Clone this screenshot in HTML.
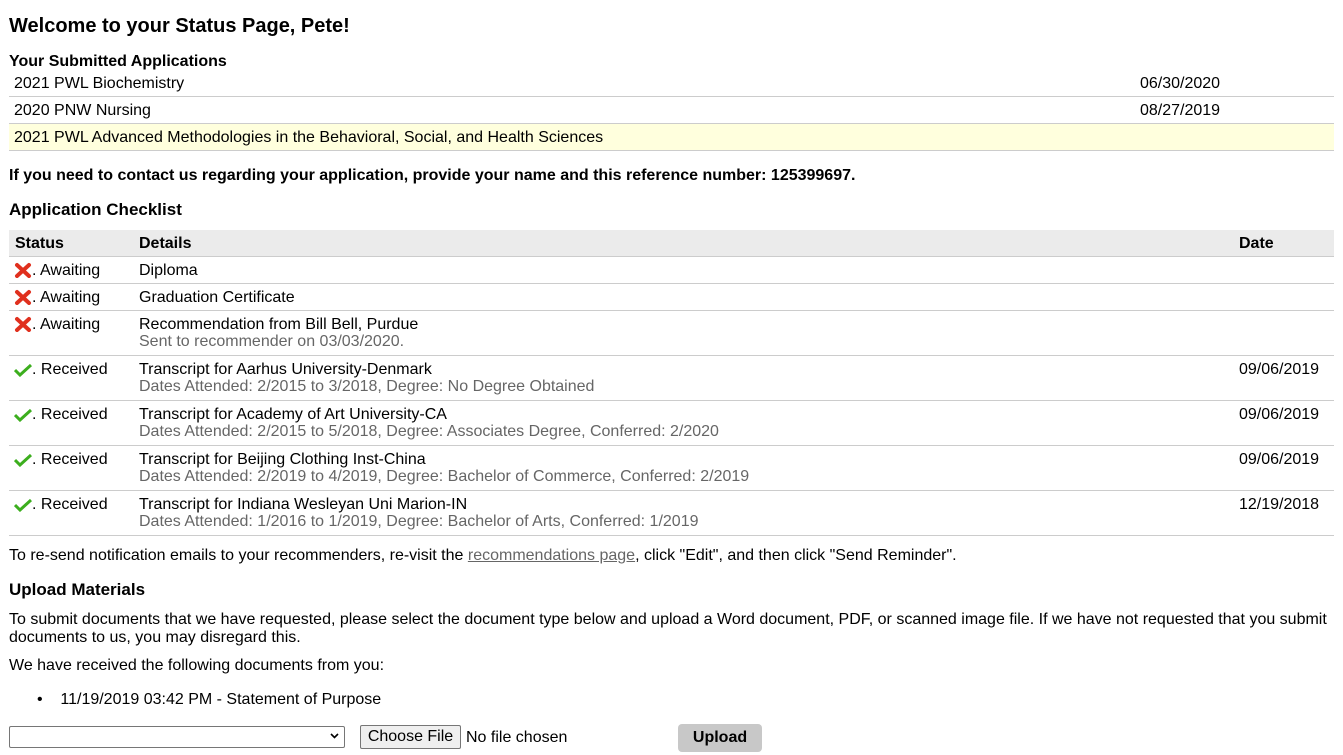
<!DOCTYPE html>
<html><head><meta charset="utf-8"><style>
body{margin:0;width:1343px;height:755px;overflow:hidden;background:#fff;font-family:"Liberation Sans",Arial,sans-serif;font-size:16px;color:#000;position:relative}
.a{position:absolute;line-height:22px;white-space:nowrap}
.b{font-weight:bold}
.g{color:#666}
.hl{position:absolute;left:9px;width:1325px;height:1px;background:#ccc}
.x{display:inline-block;width:18px;vertical-align:-3px}
</style></head><body>
<div class="a b" style="left:9px;top:14px;font-size:20px;line-height:24px">Welcome to your Status Page, Pete!</div>
<div class="a b" style="left:9px;top:51px">Your Submitted Applications</div>
<div class="a" style="left:14px;top:73px">2021 PWL Biochemistry</div><div class="a" style="left:1140px;top:73px">06/30/2020</div>
<div class="hl" style="top:96px"></div>
<div class="a" style="left:14px;top:100px">2020 PNW Nursing</div><div class="a" style="left:1140px;top:100px">08/27/2019</div>
<div class="hl" style="top:123px"></div>
<div style="position:absolute;left:9px;top:124px;width:1325px;height:26px;background:#ffffdd"></div>
<div class="a" style="left:14px;top:127px">2021 PWL Advanced Methodologies in the Behavioral, Social, and Health Sciences</div>
<div class="hl" style="top:150px"></div>
<div class="a b" style="left:9px;top:165px">If you need to contact us regarding your application, provide your name and this reference number: 125399697.</div>
<div class="a b" style="left:9px;top:199px;font-size:17px">Application Checklist</div>
<div style="position:absolute;left:9px;top:230px;width:1325px;height:26px;background:#ebebeb"></div>
<div class="a b" style="left:15px;top:233px">Status</div><div class="a b" style="left:139px;top:233px">Details</div><div class="a b" style="left:1239px;top:233px">Date</div>
<div class="hl" style="top:256px"></div>
<div class="hl" style="top:283px"></div>
<div class="hl" style="top:310px"></div>
<div class="hl" style="top:355px"></div>
<div class="hl" style="top:400px"></div>
<div class="hl" style="top:445px"></div>
<div class="hl" style="top:490px"></div>
<div class="hl" style="top:535px"></div>

<div class="a" style="left:14px;top:260px"><svg class="x" viewBox="0 0 18 16" height="16"><path d="M3 3L15 14M15 3L3 14" stroke="#e0301e" stroke-width="4" stroke-linecap="round"/></svg>. Awaiting</div><div class="a" style="left:139px;top:260px">Diploma</div>
<div class="a" style="left:14px;top:287px"><svg class="x" viewBox="0 0 18 16" height="16"><path d="M3 3L15 14M15 3L3 14" stroke="#e0301e" stroke-width="4" stroke-linecap="round"/></svg>. Awaiting</div><div class="a" style="left:139px;top:287px">Graduation Certificate</div>
<div class="a" style="left:14px;top:314px"><svg class="x" viewBox="0 0 18 16" height="16"><path d="M3 3L15 14M15 3L3 14" stroke="#e0301e" stroke-width="4" stroke-linecap="round"/></svg>. Awaiting</div><div class="a" style="left:139px;top:314px">Recommendation from Bill Bell, Purdue</div><div class="a g" style="left:139px;top:331px">Sent to recommender on 03/03/2020.</div>

<div class="a" style="left:14px;top:359px"><svg class="x" viewBox="0 0 18 16" height="16"><path d="M1 9L6 14L17 4" stroke="#3cae1e" stroke-width="3" fill="none"/></svg>. Received</div><div class="a" style="left:139px;top:359px">Transcript for Aarhus University-Denmark</div><div class="a g" style="left:139px;top:376px">Dates Attended: 2/2015 to 3/2018, Degree: No Degree Obtained</div><div class="a" style="left:1239px;top:359px">09/06/2019</div>
<div class="a" style="left:14px;top:404px"><svg class="x" viewBox="0 0 18 16" height="16"><path d="M1 9L6 14L17 4" stroke="#3cae1e" stroke-width="3" fill="none"/></svg>. Received</div><div class="a" style="left:139px;top:404px">Transcript for Academy of Art University-CA</div><div class="a g" style="left:139px;top:421px">Dates Attended: 2/2015 to 5/2018, Degree: Associates Degree, Conferred: 2/2020</div><div class="a" style="left:1239px;top:404px">09/06/2019</div>
<div class="a" style="left:14px;top:449px"><svg class="x" viewBox="0 0 18 16" height="16"><path d="M1 9L6 14L17 4" stroke="#3cae1e" stroke-width="3" fill="none"/></svg>. Received</div><div class="a" style="left:139px;top:449px">Transcript for Beijing Clothing Inst-China</div><div class="a g" style="left:139px;top:466px">Dates Attended: 2/2019 to 4/2019, Degree: Bachelor of Commerce, Conferred: 2/2019</div><div class="a" style="left:1239px;top:449px">09/06/2019</div>
<div class="a" style="left:14px;top:494px"><svg class="x" viewBox="0 0 18 16" height="16"><path d="M1 9L6 14L17 4" stroke="#3cae1e" stroke-width="3" fill="none"/></svg>. Received</div><div class="a" style="left:139px;top:494px">Transcript for Indiana Wesleyan Uni Marion-IN</div><div class="a g" style="left:139px;top:511px">Dates Attended: 1/2016 to 1/2019, Degree: Bachelor of Arts, Conferred: 1/2019</div><div class="a" style="left:1239px;top:494px">12/19/2018</div>

<div class="a" style="left:9px;top:545px">To re-send notification emails to your recommenders, re-visit the <span style="color:#666;text-decoration:underline">recommendations page</span>, click "Edit", and then click "Send Reminder".</div>
<div class="a b" style="left:9px;top:579px;font-size:17px">Upload Materials</div>
<div class="a" style="left:9px;top:609px">To submit documents that we have requested, please select the document type below and upload a Word document, PDF, or scanned image file. If we have not requested that you submit</div>
<div class="a" style="left:9px;top:627px">documents to us, you may disregard this.</div>
<div class="a" style="left:9px;top:655px">We have received the following documents from you:</div>
<div class="a" style="left:37px;top:689px">•&nbsp;&nbsp;&nbsp;&nbsp;11/19/2019 03:42 PM - Statement of Purpose</div>
<div style="position:absolute;left:9px;top:726px;width:334px;height:20px;border:1px solid #767676;border-radius:2px"></div>
<svg style="position:absolute;left:330px;top:733px" width="9" height="6" viewBox="0 0 9 6"><path d="M1 1L4.5 4.5L8 1" stroke="#000" stroke-width="1.6" fill="none"/></svg>
<div style="position:absolute;left:360px;top:725px;width:99px;height:22px;border:1px solid #767676;border-radius:2px;background:#efefef;line-height:22px;text-align:center">Choose File</div>
<div class="a" style="left:466px;top:727px">No file chosen</div>
<div style="position:absolute;left:678px;top:724px;width:84px;height:28px;background:#c8c8c8;border-radius:4px;line-height:28px;text-align:center;font-weight:bold">Upload</div>
</body></html>
